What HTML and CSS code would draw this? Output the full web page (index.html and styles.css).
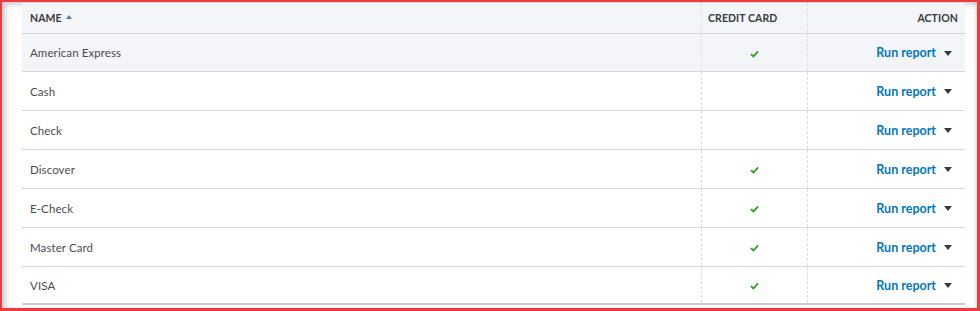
FILE: index.html
```html
<!DOCTYPE html>
<html>
<head>
<meta charset="utf-8">
<link rel="stylesheet" href="styles.css">
</head>
<body>
<div class="frame">
  <div class="table">
    <div class="row head">
      <div class="cell name">NAME <span class="sort"></span></div>
      <div class="cell cc">CREDIT CARD</div>
      <div class="cell action">ACTION</div>
    </div>
    <div class="row hover">
      <div class="cell name">American Express</div>
      <div class="cell cc"><svg class="check" viewBox="0 0 10 8"><path d="M1 4.2 L3.8 6.8 L9 1.2" /></svg></div>
      <div class="cell action"><span class="link">Run report</span><span class="caret"></span></div>
    </div>
    <div class="row">
      <div class="cell name">Cash</div>
      <div class="cell cc"></div>
      <div class="cell action"><span class="link">Run report</span><span class="caret"></span></div>
    </div>
    <div class="row">
      <div class="cell name">Check</div>
      <div class="cell cc"></div>
      <div class="cell action"><span class="link">Run report</span><span class="caret"></span></div>
    </div>
    <div class="row">
      <div class="cell name">Discover</div>
      <div class="cell cc"><svg class="check" viewBox="0 0 10 8"><path d="M1 4.2 L3.8 6.8 L9 1.2" /></svg></div>
      <div class="cell action"><span class="link">Run report</span><span class="caret"></span></div>
    </div>
    <div class="row">
      <div class="cell name">E-Check</div>
      <div class="cell cc"><svg class="check" viewBox="0 0 10 8"><path d="M1 4.2 L3.8 6.8 L9 1.2" /></svg></div>
      <div class="cell action"><span class="link">Run report</span><span class="caret"></span></div>
    </div>
    <div class="row">
      <div class="cell name">Master Card</div>
      <div class="cell cc"><svg class="check" viewBox="0 0 10 8"><path d="M1 4.2 L3.8 6.8 L9 1.2" /></svg></div>
      <div class="cell action"><span class="link">Run report</span><span class="caret"></span></div>
    </div>
    <div class="row last">
      <div class="cell name">VISA</div>
      <div class="cell cc"><svg class="check" viewBox="0 0 10 8"><path d="M1 4.2 L3.8 6.8 L9 1.2" /></svg></div>
      <div class="cell action"><span class="link">Run report</span><span class="caret"></span></div>
    </div>
  </div>
</div>
</body>
</html>
```

FILE: styles.css
```css
html, body {
  margin: 0;
  padding: 0;
  background: #fff;
}
body {
  font-family: Lato, "Open Sans", "Liberation Sans", sans-serif;
  color: #393a3d;
}
.frame {
  width: 980px;
  height: 311px;
  box-sizing: border-box;
  border-style: solid;
  border-color: #ef3b40;
  border-width: 2px 3px 3px 2px;
  background: #fff;
  box-shadow: inset 5px 4px 6px -2px rgba(0,0,0,0.22), inset -3px 0 4px -2px rgba(0,0,0,0.15);
  padding: 1px 0 0 20px;
  overflow: hidden;
}
.table {
  width: 943px;
}
.row {
  display: grid;
  grid-template-columns: 679px 107px 157px;
  height: 39px;
  box-sizing: border-box;
  border-bottom: 1px solid #d4d7dc;
  background: #fff;
}
.row.head {
  height: 31px;
  background: #f4f5f8;
  border-bottom: 1px solid #d4d7dc;
}
.row.hover {
  background: #f4f5f8;
  height: 38px;
}
.row.last {
  height: 38px;
  border-bottom: 2px solid #c9cbcf;
}
.cell {
  display: flex;
  align-items: center;
  font-size: 11.5px;
  color: #4a4b50;
  letter-spacing: 0.1px;
  box-sizing: border-box;
}
.cell.name {
  padding-left: 8px;
}
.cell.cc {
  border-left: 1px dashed #dcdde0;
  border-right: 1px dashed #dcdde0;
  justify-content: center;
}
.cell.action {
  justify-content: flex-end;
  padding-right: 13px;
}
.head .cell {
  font-size: 10.5px;
  font-weight: 700;
  color: #393a3d;
  letter-spacing: 0.1px;
}
.head .cell.cc {
  justify-content: flex-start;
  padding-left: 6px;
}
.head .cell.action {
  padding-right: 7px;
}
.sort {
  display: inline-block;
  width: 0;
  height: 0;
  border-left: 3.5px solid transparent;
  border-right: 3.5px solid transparent;
  border-bottom: 4px solid #5a7aa0;
  margin-left: 4px;
  margin-top: -2px;
}
.check {
  width: 9px;
  height: 8px;
  margin-top: 2px;
}
.check path {
  fill: none;
  stroke: #2ca01c;
  stroke-width: 2;
}
.link {
  color: #0077c5;
  font-weight: 700;
  font-size: 12.5px;
  letter-spacing: 0;
}
.caret {
  display: inline-block;
  width: 0;
  height: 0;
  border-left: 4.5px solid transparent;
  border-right: 4.5px solid transparent;
  border-top: 5px solid #393a3d;
  margin-left: 8px;
  margin-top: 1px;
}
```
